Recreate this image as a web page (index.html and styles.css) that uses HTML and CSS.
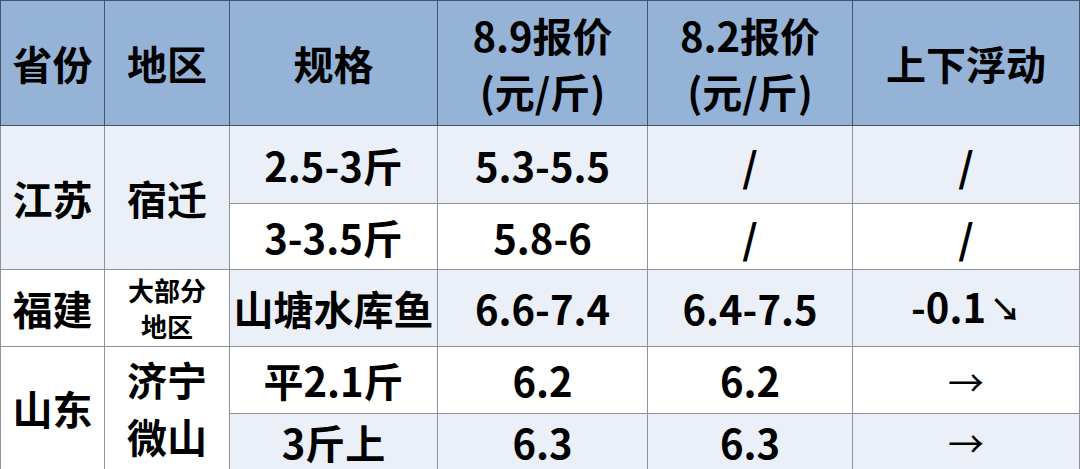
FILE: index.html
```html
<!DOCTYPE html>
<html lang="zh-CN">
<head>
<meta charset="utf-8">
<link rel="stylesheet" href="styles.css">
</head>
<body>
<table class="price">
  <colgroup>
    <col class="c1"><col class="c2"><col class="c3"><col class="c4"><col class="c5"><col class="c6">
  </colgroup>
  <thead>
    <tr class="head">
      <th>省份</th>
      <th>地区</th>
      <th>规格</th>
      <th>8.9报价<br>(元/斤)</th>
      <th>8.2报价<br>(元/斤)</th>
      <th>上下浮动</th>
    </tr>
  </thead>
  <tbody>
    <tr class="r1 light">
      <td rowspan="2">江苏</td>
      <td rowspan="2">宿迁</td>
      <td>2.5-3斤</td>
      <td>5.3-5.5</td>
      <td>/</td>
      <td>/</td>
    </tr>
    <tr class="r2">
      <td>3-3.5斤</td>
      <td>5.8-6</td>
      <td>/</td>
      <td>/</td>
    </tr>
    <tr class="r3 light">
      <td class="white">福建</td>
      <td class="white small">大部分<br>地区</td>
      <td>山塘水库鱼</td>
      <td>6.6-7.4</td>
      <td>6.4-7.5</td>
      <td>-0.1<span class="down">↘</span></td>
    </tr>
    <tr class="r4">
      <td rowspan="2">山东</td>
      <td rowspan="2" class="tall">济宁<br>微山</td>
      <td>平2.1斤</td>
      <td>6.2</td>
      <td>6.2</td>
      <td><span class="arrow">→</span></td>
    </tr>
    <tr class="r5 light">
      <td>3斤上</td>
      <td>6.3</td>
      <td>6.3</td>
      <td><span class="arrow">→</span></td>
    </tr>
  </tbody>
</table>
</body>
</html>
```

FILE: styles.css
```css
html, body {
  margin: 0;
  padding: 0;
  background: #ffffff;
  overflow: hidden;
}

.price {
  border-collapse: collapse;
  table-layout: fixed;
  width: 1079px;
  font-family: "Noto Sans CJK SC", "Noto Sans", sans-serif;
  font-weight: 700;
  color: #000000;
  text-align: center;
}

.c1 { width: 104px; }
.c2 { width: 125px; }
.c3 { width: 208px; }
.c4 { width: 210px; }
.c5 { width: 205px; }
.c6 { width: 227px; }

.price th,
.price td {
  padding: 0;
  vertical-align: middle;
  border: 1.5px solid #8f9399;
  font-size: 40px;
  line-height: 56px;
  white-space: nowrap;
}

.price th {
  background: #95b3d7;
  border-color: #46546a;
  font-weight: 700;
}

.head th { height: 124px; }

.r1 td { height: 77px; }
.r2 td { height: 65px; }
.r3 td { height: 76px; }
.r4 td { height: 66px; }
.r5 td { height: 55px; line-height: 48px; }

.light td { background: #ebf0f8; }
.light td.white { background: #ffffff; }

.r1 td[rowspan] { background: #ebf0f8; }

.price td.small {
  font-size: 26px;
  line-height: 36px;
}

.price td.tall { line-height: 57px; }

.down {
  font-size: 31px;
  margin-left: 4px;
  position: relative;
  top: -2px;
}

.arrow {
  font-weight: 400;
  font-size: 36px;
}
```
